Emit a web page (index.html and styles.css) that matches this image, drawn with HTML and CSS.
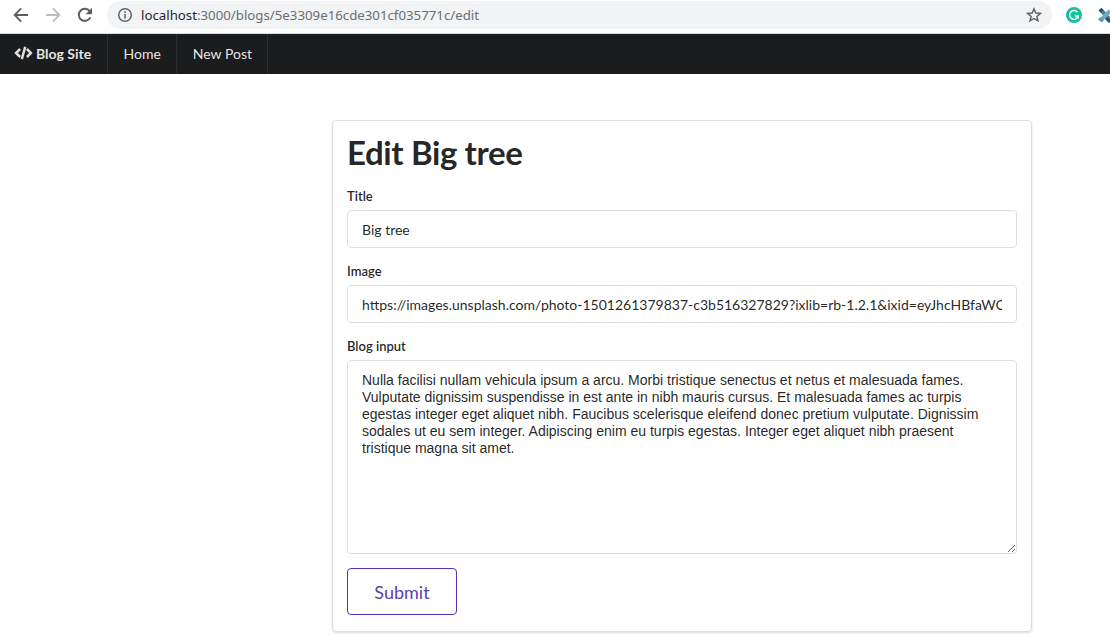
FILE: index.html
```html
<!DOCTYPE html>
<html lang="en">
<head>
<meta charset="utf-8">
<title>Blog Site</title>
<link rel="stylesheet" href="styles.css">
</head>
<body>
<header class="browser">
  <svg class="nav-icon" width="16" height="16" viewBox="0 0 16 16"><path d="M15 7H4l4.800-4.900L7.500 .8 .4 8l7.100 7.200 1.300-1.300L4 9h11z" fill="#5a5d61"/></svg>
  <svg class="nav-icon" width="16" height="16" viewBox="0 0 16 16"><path d="M1 7h11L7.200 2.100 8.500 .8 15.600 8l-7.100 7.200-1.300-1.300L12 9H1z" fill="#babcbe"/></svg>
  <svg class="nav-icon" width="16" height="16" viewBox="0 0 16 16"><path d="M13.300 10.300A6 6 0 1 1 12.600 4.200" fill="none" stroke="#5a5d61" stroke-width="2"/><path d="M15 .8v6.400H8.600z" fill="#5a5d61"/></svg>
  <div class="address">
    <svg width="16" height="16" viewBox="0 0 16 16"><circle cx="8" cy="8" r="6.300" fill="none" stroke="#5f6368" stroke-width="1.500"/><path d="M7.200 7h1.600v4.500H7.200zM7.200 4.300h1.600v1.600H7.200z" fill="#5f6368"/></svg>
    <span class="url"><span class="host">localhost</span>:3000/blogs/5e3309e16cde301cf035771c/edit</span>
    <svg class="star" width="16" height="16" viewBox="0 0 16 16"><path d="M8 1.800l1.800 4.200 4.600.4-3.500 3 1.100 4.500L8 11.500 4 13.900l1.100-4.500-3.500-3 4.600-.4z" fill="none" stroke="#5a5d61" stroke-width="1.400"/></svg>
  </div>
  <svg class="grammar" width="16" height="16" viewBox="0 0 16 16"><circle cx="8" cy="8" r="8" fill="#15c39a"/><path d="M11.400 5.100A4.400 4.400 0 1 0 12.300 9H8.800M12.300 8.300v3.300" fill="none" stroke="#fff" stroke-width="1.400"/></svg>
  <svg class="extension" width="12" height="16" viewBox="0 0 12 16"><path d="M3 3l9 10" stroke="#3f7c98" stroke-width="4"/><path d="M2.500 13.500L12 4" stroke="#75a9c1" stroke-width="4"/><path d="M1.500 4.500l3-2.500" stroke="#1d536d" stroke-width="3"/><path d="M1 11.500l4 2.500" stroke="#5b93ae" stroke-width="3"/><path d="M8 11l4 4" stroke="#1d536d" stroke-width="3"/></svg>
</header>
<nav class="menu">
  <a class="item brand"><svg width="19" height="14" viewBox="0 0 19 14"><path d="M6.100 3L2.100 7l4 4M12.900 3l4 4-4 4M11.200.8L7.800 13.200" fill="none" stroke="#dededf" stroke-width="2.500"/></svg>Blog Site</a>
  <a class="item">Home</a>
  <a class="item">New Post</a>
</nav>
<main class="segment">
  <h1 class="title">Edit Big tree</h1>
  <form class="form">
    <label class="label" for="title">Title</label>
    <input class="input" id="title" type="text" value="Big tree">
    <label class="label" for="image">Image</label>
    <input class="input" id="image" type="text" value="https://images.unsplash.com/photo-1501261379837-c3b516327829?ixlib=rb-1.2.1&amp;ixid=eyJhcHBfaWQiOjEyMDd9">
    <label class="label" for="body">Blog input</label>
    <textarea class="textarea" id="body" spellcheck="false">Nulla facilisi nullam vehicula ipsum a arcu. Morbi tristique senectus et netus et malesuada fames.
Vulputate dignissim suspendisse in est ante in nibh mauris cursus. Et malesuada fames ac turpis
egestas integer eget aliquet nibh. Faucibus scelerisque eleifend donec pretium vulputate. Dignissim
sodales ut eu sem integer. Adipiscing enim eu turpis egestas. Integer eget aliquet nibh praesent
tristique magna sit amet.</textarea>
    <button class="submit" type="button">Submit</button>
  </form>
</main>
</body>
</html>
```
FILE: styles.css
```css
* { box-sizing: border-box; }
body {
  margin: 0;
  height: 636px;
  overflow: hidden;
  background: #fff;
  color: rgba(0, 0, 0, .87);
  font: 14px Lato, sans-serif;
}
.browser {
  display: flex;
  align-items: center;
  height: 34px;
  padding: 0 0 3px 13px;
  border-bottom: 1px solid #dcdfe1;
}
.nav-icon { flex: none; margin-right: 16px; }
.address {
  display: flex;
  align-items: center;
  width: 945px;
  height: 28px;
  margin-left: -2px;
  padding: 0 10px;
  border-radius: 14px;
  background: #f1f3f4;
  flex: none;
}
.url {
  margin-left: 8px;
  color: #6b6e72;
  font: 13.25px "Noto Sans", sans-serif;
  white-space: nowrap;
}
.host { color: #26282b; }
.star { margin-left: auto; }
.grammar { flex: none; margin-left: 14px; }
.extension { flex: none; margin-left: 16px; }
.menu {
  display: flex;
  height: 40px;
  background: #1b1c1d;
}
.item {
  display: flex;
  align-items: center;
  padding: 0 15.500px 2px;
  border-right: 1px solid #2d2e2f;
  color: rgba(255, 255, 255, .9);
  white-space: nowrap;
}
.brand { width: 108px; padding: 0 0 2px 14px; font-weight: 700; }
.brand svg { margin-right: 3px; }
.segment {
  width: 700px;
  height: 512px;
  margin: 46px 0 0 332px;
  padding: 14px;
  border: 1px solid #dcddde;
  border-radius: 4px;
  box-shadow: 0 1px 2px rgba(34, 36, 38, .15);
}
.title {
  height: 36px;
  margin: 0 0 16px;
  font-size: 33px;
  line-height: 34px;
  font-weight: 700;
  letter-spacing: -.38px;
}
.form { display: flex; flex-direction: column; align-items: flex-start; }
.label {
  height: 18px;
  margin-bottom: 5px;
  font-size: 13px;
  line-height: 18px;
  font-weight: 600;
}
.input {
  width: 670px;
  height: 38px;
  margin: 0 0 14px;
  padding: 0 14px;
  border: 1px solid #dcddde;
  border-radius: 4px;
  color: rgba(0, 0, 0, .87);
  font: 14px Lato, sans-serif;
}
.textarea {
  width: 670px;
  height: 194px;
  margin: 0 0 14px;
  padding: 11px 14px;
  border: 1px solid #dcddde;
  border-radius: 4px;
  color: rgba(0, 0, 0, .87);
  font: 14px/17px "Liberation Sans", Arial, sans-serif;
  white-space: pre;
  overflow: hidden;
  resize: both;
}
.submit {
  width: 110px;
  height: 47px;
  padding: 0;
  border: 1px solid #5a30b5;
  border-radius: 4px;
  background: #fff;
  color: #6040ae;
  font: 18px Lato, sans-serif;
}
```
